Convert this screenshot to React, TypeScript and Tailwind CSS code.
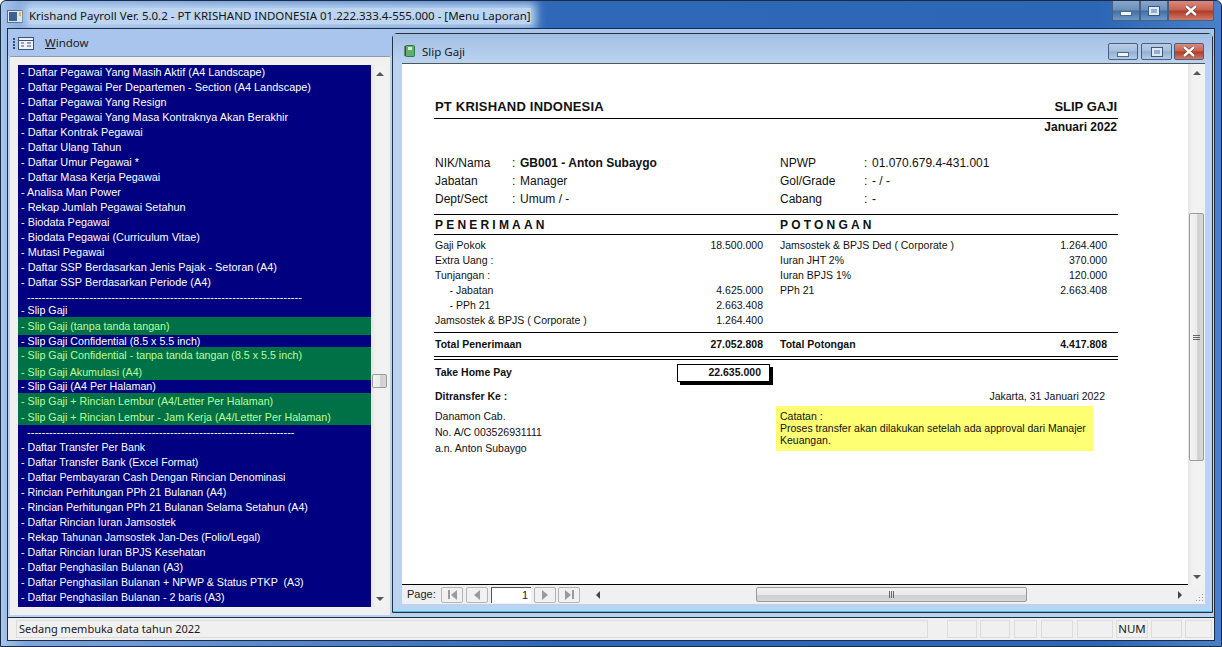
const font = "font-['Liberation_Sans',Arial,sans-serif]";

type Row = { text: string; h: number; green?: boolean; size: string };

const topRows = [
  "- Daftar Pegawai Yang Masih Aktif (A4 Landscape)",
  "- Daftar Pegawai Per Departemen - Section (A4 Landscape)",
  "- Daftar Pegawai Yang Resign",
  "- Daftar Pegawai Yang Masa Kontraknya Akan Berakhir",
  "- Daftar Kontrak Pegawai",
  "- Daftar Ulang Tahun",
  "- Daftar Umur Pegawai *",
  "- Daftar Masa Kerja Pegawai",
  "- Analisa Man Power",
  "- Rekap Jumlah Pegawai Setahun",
  "- Biodata Pegawai",
  "- Biodata Pegawai (Curriculum Vitae)",
  "- Mutasi Pegawai",
  "- Daftar SSP Berdasarkan Jenis Pajak - Setoran (A4)",
  "- Daftar SSP Berdasarkan Periode (A4)",
];

const slipRows = [
  { text: "  " + "-".repeat(75), h: 14, size: "text-[11px]" },
  { text: "- Slip Gaji", h: 13, size: "text-[10.7px]" },
  { text: "- Slip Gaji (tanpa tanda tangan)", h: 18, green: true, size: "text-[10.7px]" },
  { text: "- Slip Gaji Confidential (8.5 x 5.5 inch)", h: 12, size: "text-[10.7px]" },
  { text: "- Slip Gaji Confidential - tanpa tanda tangan (8.5 x 5.5 inch)", h: 17, green: true, size: "text-[10.7px]" },
  { text: "- Slip Gaji Akumulasi (A4)", h: 16, green: true, size: "text-[10.7px]" },
  { text: "- Slip Gaji (A4 Per Halaman)", h: 13, size: "text-[10.7px]" },
  { text: "- Slip Gaji + Rincian Lembur (A4/Letter Per Halaman)", h: 16, green: true, size: "text-[10.7px]" },
  { text: "- Slip Gaji + Rincian Lembur - Jam Kerja (A4/Letter Per Halaman)", h: 16, green: true, size: "text-[10.7px]" },
  { text: "  " + "-".repeat(73), h: 15, size: "text-[11px]" },
];

const bottomRows = [
  "- Daftar Transfer Per Bank",
  "- Daftar Transfer Bank (Excel Format)",
  "- Daftar Pembayaran Cash Dengan Rincian Denominasi",
  "- Rincian Perhitungan PPh 21 Bulanan (A4)",
  "- Rincian Perhitungan PPh 21 Bulanan Selama Setahun (A4)",
  "- Daftar Rincian Iuran Jamsostek",
  "- Rekap Tahunan Jamsostek Jan-Des (Folio/Legal)",
  "- Daftar Rincian Iuran BPJS Kesehatan",
  "- Daftar Penghasilan Bulanan (A3)",
  "- Daftar Penghasilan Bulanan + NPWP & Status PTKP  (A3)",
  "- Daftar Penghasilan Bulanan - 2 baris (A3)",
];

const listRows: Row[] = [
  ...topRows.map((text) => ({ text, h: 15, size: "text-[10.9px]" })),
  ...slipRows,
  ...bottomRows.map((text) => ({ text, h: 15, size: "text-[10.65px]" })),
];

const earnings = [
  ["Gaji Pokok", "18.500.000"],
  ["Extra Uang :", ""],
  ["Tunjangan :", ""],
  ["     - Jabatan", "4.625.000"],
  ["     - PPh 21", "2.663.408"],
  ["Jamsostek & BPJS ( Corporate )", "1.264.400"],
];

const deductions = [
  ["Jamsostek & BPJS Ded ( Corporate )", "1.264.400"],
  ["Iuran JHT 2%", "370.000"],
  ["Iuran BPJS 1%", "120.000"],
  ["PPh 21", "2.663.408"],
];

const statusPanes = [
  "w-[30px]",
  "w-[30px] ml-[3px]",
  "w-[23px] ml-[4px]",
  "w-[32px] ml-[4px]",
  "w-[36px] ml-[4px]",
];

function Triangle({ dir }: { dir: "up" | "down" | "left" | "right" }) {
  const cls = {
    up: "border-x-[4px] border-b-[4px] border-x-transparent border-b-[#555]",
    down: "border-x-[4px] border-t-[4px] border-x-transparent border-t-[#555]",
    left: "border-y-[4px] border-r-[4px] border-y-transparent border-r-[#444]",
    right: "border-y-[4px] border-l-[4px] border-y-transparent border-l-[#444]",
  }[dir];
  return <span className={`block w-0 h-0 ${cls}`} />;
}

function CaptionButton({ kind, w, h, outer }: { kind: "min" | "max" | "close"; w: string; h: string; outer?: boolean }) {
  let bg = "bg-[linear-gradient(#b9cde4_0%,#a5bfdc_48%,#8fafd2_52%,#b4cce6_100%)]";
  if (kind === "close") {
    bg = "bg-[linear-gradient(#d98a7c_0%,#c9604f_48%,#b03a28_52%,#cf7a68_100%)]";
  } else if (outer) {
    bg = "bg-[linear-gradient(#87a6cb_0%,#6b8fba_48%,#3f6ea6_52%,#6f97c6_100%)]";
  }
  return (
    <div
      className={`${w} ${h} ${bg} flex items-center justify-center border border-[#47607f] ${
        outer ? "border-t-0" : "rounded-[2px]"
      }`}
    >
      {kind === "min" && <span className="block w-[12px] h-[5px] mt-[6px] bg-[#f2f6fb] border border-[#50688a]" />}
      {kind === "max" && (
        <span className="block w-[12px] h-[10px] bg-[#dfe8f3] border border-[#3f5878] p-[2px]">
          <span className="block w-full h-full bg-[#8fb0d4]" />
        </span>
      )}
      {kind === "close" && (
        <svg width="14" height="11" viewBox="0 0 14 11">
          <path d="M2 1 L12 10 M12 1 L2 10" stroke="#5b2a22" strokeWidth="3.6" />
          <path d="M2 1 L12 10 M12 1 L2 10" stroke="#fff" strokeWidth="2.4" />
        </svg>
      )}
    </div>
  );
}

function NavButton({ dir, bar }: { dir: "left" | "right"; bar?: boolean }) {
  return (
    <div className="w-[22px] h-[16px] flex items-center justify-center gap-[1px] bg-[#f1f1f1] border border-[#b4b4b4] rounded-[2px]">
      {bar && dir === "left" && <span className="block w-[2px] h-[9px] bg-[#9a9a9a]" />}
      <span
        className={`block w-0 h-0 border-y-[5px] border-y-transparent ${
          dir === "left" ? "border-r-[6px] border-r-[#9a9a9a]" : "border-l-[6px] border-l-[#9a9a9a]"
        }`}
      />
      {bar && dir === "right" && <span className="block w-[2px] h-[9px] bg-[#9a9a9a]" />}
    </div>
  );
}

function VScroll({ thumbTop, thumbH, grip }: { thumbTop: string; thumbH: string; grip?: boolean }) {
  return (
    <div className="w-[17px] h-full shrink-0 flex flex-col bg-[linear-gradient(90deg,#e6e6e6,#f2f2f2_30%,#f2f2f2)]">
      <div className="h-[17px] shrink-0 flex items-center justify-center">
        <Triangle dir="up" />
      </div>
      <div className="flex-1 min-h-0 px-[1px]">
        <div
          className={`${thumbTop} ${thumbH} flex items-center justify-center border border-[#9b9b9b] rounded-[2px] bg-[linear-gradient(90deg,#f4f4f4,#ececec_50%,#cfcfcf_60%,#d8d8d8)]`}
        >
          {grip && (
            <span className="flex flex-col gap-[1px]">
              <span className="block w-[7px] h-[1px] bg-[#666]" />
              <span className="block w-[7px] h-[1px] bg-[#666]" />
              <span className="block w-[7px] h-[1px] bg-[#666]" />
            </span>
          )}
        </div>
      </div>
      <div className="h-[17px] shrink-0 flex items-center justify-center">
        <Triangle dir="down" />
      </div>
    </div>
  );
}

function MoneyRow({ label, value, bold }: { label: string; value: string; bold?: boolean }) {
  return (
    <div className={`flex items-center justify-between h-[15px] whitespace-pre ${bold ? "font-bold" : ""}`}>
      <span>{label}</span>
      <span>{value}</span>
    </div>
  );
}

function InfoRow({ label, value, bold, left }: { label: string; value: string; bold?: boolean; left: string }) {
  return (
    <div className="flex items-center h-[18px]">
      <span className={left}>{label}</span>
      <span className="w-[8px]">:</span>
      <span className={bold ? "font-bold" : ""}>{value}</span>
    </div>
  );
}

function Report() {
  return (
    <div className="flex-1 min-w-0 bg-white overflow-hidden border-b border-black pl-[32px] pt-[35px] text-[12px] text-[#111]">
      <div className="w-[684px]">
        <div className="h-[20px] flex justify-between items-start px-[1px] border-b border-black text-[13px] leading-[16px] font-bold">
          <span className="tracking-[0.2px]">PT KRISHAND INDONESIA</span>
          <span>SLIP GAJI</span>
        </div>
        <div className="h-[16px] flex justify-end items-center px-[1px] font-bold">Januari 2022</div>

        <div className="mt-[19px] px-[1px] flex">
          <div className="w-[345px]">
            <InfoRow left="w-[77px]" label="NIK/Nama" value="GB001 - Anton Subaygo" bold />
            <InfoRow left="w-[77px]" label="Jabatan" value="Manager" />
            <InfoRow left="w-[77px]" label="Dept/Sect" value="Umum / -" />
          </div>
          <div>
            <InfoRow left="w-[84px]" label="NPWP" value="01.070.679.4-431.001" />
            <InfoRow left="w-[84px]" label="Gol/Grade" value="- / -" />
            <InfoRow left="w-[84px]" label="Cabang" value="-" />
          </div>
        </div>

        <div className="mt-[6px] h-[21px] flex items-center px-[1px] border-y border-black font-bold tracking-[3.2px]">
          <span className="w-[345px]">PENERIMAAN</span>
          <span>POTONGAN</span>
        </div>

        <div className="pt-[3px] pb-[4px] flex text-[10.5px] px-[1px]">
          <div className="w-[328px]">
            {earnings.map(([label, value]) => (
              <MoneyRow key={label} label={label} value={value} />
            ))}
          </div>
          <div className="w-[327px] ml-[17px]">
            {deductions.map(([label, value]) => (
              <MoneyRow key={label} label={label} value={value} />
            ))}
          </div>
        </div>

        <div className="h-[24px] flex items-center border-t border-black text-[10.5px] px-[1px]">
          <div className="w-[328px]">
            <MoneyRow label="Total Penerimaan" value="27.052.808" bold />
          </div>
          <div className="w-[327px] ml-[17px]">
            <MoneyRow label="Total Potongan" value="4.417.808" bold />
          </div>
        </div>
        <div className="h-[4px] border-y border-black" />

        <div className="h-[25px] flex items-center px-[1px] text-[10.5px] font-bold">
          <span className="w-[242px]">Take Home Pay</span>
          <div className="w-[93px] h-[18px] pr-[8px] flex items-center justify-end bg-white border border-black shadow-[3px_3px_0_#000]">
            22.635.000
          </div>
        </div>

        <div className="mt-[4px] h-[16px] flex items-center justify-between pl-[1px] pr-[13px] text-[10.5px]">
          <span className="font-bold">Ditransfer Ke :</span>
          <span>Jakarta, 31 Januari 2022</span>
        </div>

        <div className="mt-[1px] flex px-[1px] text-[10.5px]">
          <div className="w-[341px] pt-[2px] leading-[16px]">
            <div>Danamon Cab.</div>
            <div>No. A/C 003526931111</div>
            <div>a.n. Anton Subaygo</div>
          </div>
          <div className="w-[317px] h-[45px] pl-[4px] pt-[4px] leading-[12px] bg-[#ffff73]">
            <div>Catatan :</div>
            <div>Proses transfer akan dilakukan setelah ada approval dari Manajer Keuangan.</div>
          </div>
        </div>
      </div>
    </div>
  );
}

function PageBar() {
  return (
    <div className="h-[19px] shrink-0 flex items-center bg-[#f0f0f0] text-[11px] text-[#222]">
      <span className="ml-[5px] w-[34px]">Page:</span>
      <NavButton dir="left" bar />
      <div className="ml-[3px]">
        <NavButton dir="left" />
      </div>
      <div className="ml-[3px] w-[40px] h-[16px] flex items-center justify-end pr-[3px] bg-white border-l border-t border-[#555]">1</div>
      <div className="ml-[3px]">
        <NavButton dir="right" />
      </div>
      <div className="ml-[2px]">
        <NavButton dir="right" bar />
      </div>
      <div className="ml-[9px] flex-1 h-[17px] flex items-center">
        <div className="w-[17px] flex justify-center">
          <Triangle dir="left" />
        </div>
        <div className="ml-[150px] w-[271px] h-[15px] flex items-center justify-center border border-[#9b9b9b] rounded-[2px] bg-[linear-gradient(#f2f2f2,#e8e8e8_50%,#cfcfcf_55%,#d6d6d6)]">
          <span className="flex gap-[1px]">
            <span className="block w-[1px] h-[7px] bg-[#666]" />
            <span className="block w-[1px] h-[7px] bg-[#666]" />
            <span className="block w-[1px] h-[7px] bg-[#666]" />
          </span>
        </div>
        <div className="ml-[144px] w-[17px] flex justify-center">
          <Triangle dir="right" />
        </div>
      </div>
      <div className="w-[17px] h-full flex items-end justify-end pr-[1px] pb-[2px]">
        <svg width="9" height="9" viewBox="0 0 9 9">
          <path d="M7 1h1v1H7zM4 4h1v1H4zM7 4h1v1H7zM1 7h1v1H1zM4 7h1v1H4zM7 7h1v1H7z" fill="#9a9a9a" />
        </svg>
      </div>
    </div>
  );
}

function ReportWindow() {
  return (
    <div className="ml-[2px] mt-[-23px] w-[821px] h-[580px] flex flex-col border border-[#26303c] rounded-t-[5px] bg-[#b9d3f0]">
      <div className="h-[29px] shrink-0 flex items-end pb-[3px] pl-[10px] pr-[8px] bg-[linear-gradient(#a3bfe2,#bad3f0)]">
        <svg width="13" height="14" viewBox="0 0 13 14" className="mb-[2px]">
          <rect x="2.5" y="1.5" width="9" height="11" rx="1" fill="#5cb06a" stroke="#2f7a42" />
          <rect x="5" y="3" width="4" height="3" fill="#d3f0d2" />
          <path d="M1 3h2M1 5h2M1 7h2M1 9h2M1 11h2" stroke="#333" />
        </svg>
        <span className="ml-[6px] flex-1 font-['Noto_Sans',sans-serif] text-[11.5px] leading-[16px] text-[#1a1a1a]">Slip Gaji</span>
        <CaptionButton kind="min" w="w-[30px]" h="h-[17px]" />
        <div className="ml-[3px]">
          <CaptionButton kind="max" w="w-[31px]" h="h-[17px]" />
        </div>
        <div className="ml-[2px]">
          <CaptionButton kind="close" w="w-[30px]" h="h-[17px]" />
        </div>
      </div>
      <div className="flex-1 min-h-0 ml-[9px] mr-[7px] mb-[7px] flex flex-col border-t border-[#555] bg-white">
        <div className="flex-1 min-h-0 flex">
          <Report />
          <VScroll thumbTop="mt-[132px]" thumbH="h-[248px]" grip />
        </div>
        <PageBar />
      </div>
      <div className="h-[1px] shrink-0 bg-[#3ec5e8]" />
    </div>
  );
}

function MenuList() {
  return (
    <div className="ml-[2px] w-[380px] h-[559px] shrink-0 flex flex-col border-t border-[#8e9aa8] bg-[#f0f0f0] pt-[8px] pl-[8px] pr-[1px] pb-[3px]">
      <div className="h-[542px] flex">
        <div className="w-[353px] bg-[#000080] overflow-hidden">
          {listRows.map((r, i) => (
            <div
              key={i}
              style={{ height: r.h }}
              className={`flex items-center pl-[3px] whitespace-pre ${r.size} ${
                r.green ? "bg-[#007146] text-[#b8ff9e]" : "text-white"
              }`}
            >
              {r.text}
            </div>
          ))}
        </div>
        <VScroll thumbTop="mt-[292px]" thumbH="h-[14px]" />
      </div>
    </div>
  );
}

export default function App() {
  return (
    <div
      className={`${font} w-[1222px] h-[647px] flex flex-col overflow-hidden rounded-t-[6px] border border-[#1c2c44] px-[6px] bg-[linear-gradient(90deg,#a8c6ec_0%,#7ea6dc_2%,#3068b8_45%,#2c66b4_90%,#4a80c8_100%)]`}
    >
      <div className="h-[27px] shrink-0 flex items-start">
        <div className="pt-[7px] flex items-center">
          <svg width="16" height="15" viewBox="0 0 16 15">
            <rect x="0.5" y="1.5" width="15" height="12" fill="#dfe8f2" stroke="#5b6b80" />
            <rect x="2" y="3" width="8" height="9" fill="#3d5f8f" />
            <rect x="12" y="3" width="2" height="4" fill="#e0b040" />
          </svg>
          <span className="ml-[6px] font-['Noto_Sans',sans-serif] text-[11.5px] leading-[16px] text-[#141414] whitespace-pre bg-[#bdd5f1] shadow-[0_0_10px_5px_#bdd5f1]">
            Krishand Payroll Ver. 5.0.2 - PT KRISHAND INDONESIA 01.222.333.4-555.000 - [Menu Laporan]
          </span>
        </div>
        <div className="ml-auto mr-[1px] flex">
          <CaptionButton kind="min" w="w-[28px]" h="h-[20px]" outer />
          <CaptionButton kind="max" w="w-[28px]" h="h-[20px]" outer />
          <CaptionButton kind="close" w="w-[46px]" h="h-[20px]" outer />
        </div>
      </div>

      <div className="flex-1 min-h-0 flex flex-col border border-[#1c2c44] bg-[#b9d3f0]">
        <div className="h-[27px] shrink-0 flex items-center pt-[1px] bg-[#a9c5ee] pl-[5px]">
          <span className="flex flex-col gap-[1px] mr-[3px]">
            <span className="block w-[2px] h-[2px] bg-[#2a4f85]" />
            <span className="block w-[2px] h-[2px] bg-[#2a4f85]" />
            <span className="block w-[2px] h-[2px] bg-[#2a4f85]" />
            <span className="block w-[2px] h-[2px] bg-[#2a4f85]" />
          </span>
          <svg width="16" height="13" viewBox="0 0 16 13">
            <rect x="0.5" y="0.5" width="15" height="12" fill="#eef2f8" stroke="#39527a" />
            <path d="M1 3.5h14" stroke="#39527a" />
            <path d="M3 6h3M3 9h3M9 6h4M9 9h4" stroke="#39527a" />
          </svg>
          <span className="ml-[11px] font-['Noto_Sans',sans-serif] text-[11.5px] text-[#1a1a1a]">
            <span className="underline">W</span>indow
          </span>
        </div>
        <div className="flex-1 min-h-0 flex items-start">
          <MenuList />
          <ReportWindow />
        </div>
      </div>

      <div className="h-[23px] shrink-0 bg-[#f0f0f0] border-x border-b border-[#1c2c44] flex items-start pt-[2px] pl-[8px]">
        <div className="h-[18px] w-[912px] flex items-center pl-[2px] border border-[#dcdcdc] font-['Noto_Sans',sans-serif] text-[11px] text-[#1a1a1a]">
          Sedang membuka data tahun 2022
        </div>
        <div className="ml-[19px] flex">
          {statusPanes.map((c, i) => (
            <div key={i} className={`h-[18px] border border-[#dcdcdc] ${c}`} />
          ))}
          <div className="ml-[3px] w-[32px] h-[18px] flex items-center justify-center border border-[#dcdcdc] font-['Noto_Sans',sans-serif] text-[11.5px] text-[#1a1a1a]">
            NUM
          </div>
          <div className="ml-[3px] w-[31px] h-[18px] border border-[#dcdcdc]" />
          <div className="ml-[3px] w-[27px] h-[18px] border border-[#dcdcdc]" />
        </div>
      </div>
      <div className="h-[5px] shrink-0" />
    </div>
  );
}
